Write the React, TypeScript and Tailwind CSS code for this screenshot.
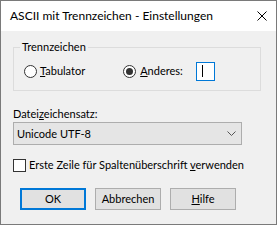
import React from "react";

const font = { fontFamily: 'Lato, "Noto Sans", sans-serif' };

function Radio({ checked }: { checked?: boolean }) {
  return (
    <span className="w-[13px] h-[13px] rounded-full border border-[#333333] bg-white flex items-center justify-center shrink-0">
      {checked && <span className="w-[7px] h-[7px] rounded-full bg-[#333333]" />}
    </span>
  );
}

export default function App() {
  return (
    <div
      className="w-[277px] h-[225px] border border-[#7a7a7a] bg-[#f0f0f0] flex flex-col text-[11px] text-black leading-[16px] whitespace-nowrap"
      style={font}
    >
      <div className="h-[30px] bg-white flex items-center justify-between pl-[9px] pr-[9px] shrink-0">
        <span className="text-[12px]">ASCII mit Trennzeichen - Einstellungen</span>
        <svg width="10" height="10" viewBox="0 0 10 10">
          <path d="M0.5 0.5 L9.5 9.5 M9.5 0.5 L0.5 9.5" stroke="#000" strokeWidth="1" />
        </svg>
      </div>
      <div className="flex flex-col pl-[12px]">
        <div className="relative mt-[16px] w-[248px] h-[44px] border border-[#dcdcdc] flex items-center">
          <span className="absolute -top-[9px] left-[6px] bg-[#f0f0f0] px-[2px]">Trennzeichen</span>
          <div className="flex items-center mt-[4px] ml-[10px]">
            <Radio />
            <span className="ml-[3px]"><u>T</u>abulator</span>
          </div>
          <div className="flex items-center mt-[4px] ml-[38px]">
            <Radio checked />
            <span className="ml-[4px]"><u>A</u>nderes:</span>
            <span className="ml-[13px] w-[19px] h-[19px] border border-[#0078d7] bg-white flex items-center pl-[5px]">
              <span className="w-[1px] h-[12px] bg-black" />
            </span>
          </div>
        </div>
        <div className="mt-[15px]">
          Datei<u>z</u>eichensatz:
        </div>
        <div className="w-[229px] h-[23px] border border-[#adadad] bg-[#e5e5e5] flex items-center justify-between pl-[3px] pr-[5px]">
          <span>Unicode UTF-8</span>
          <svg width="9" height="5" viewBox="0 0 9 5">
            <path d="M0.5 0.5 L4.5 4.5 L8.5 0.5" fill="none" stroke="#555" strokeWidth="1" />
          </svg>
        </div>
        <div className="mt-[12px] h-[16px] flex items-center">
          <span className="w-[13px] h-[13px] border border-[#333333] bg-white shrink-0" />
          <span className="ml-[3px]">
            Erste Zeile für Spaltenüberschrift <u>v</u>erwenden
          </span>
        </div>
        <div className="mt-[15px] ml-[7px] flex gap-[9px]">
          <button className="w-[66px] h-[22px] border-2 border-[#0078d7] bg-[#e1e1e1] flex items-center justify-center">
            OK
          </button>
          <button className="w-[66px] h-[22px] border border-[#adadad] bg-[#e1e1e1] flex items-center justify-center">
            Abbrechen
          </button>
          <button className="w-[66px] h-[22px] border border-[#adadad] bg-[#e1e1e1] flex items-center justify-center">
            <span><u>H</u>ilfe</span>
          </button>
        </div>
      </div>
    </div>
  );
}
